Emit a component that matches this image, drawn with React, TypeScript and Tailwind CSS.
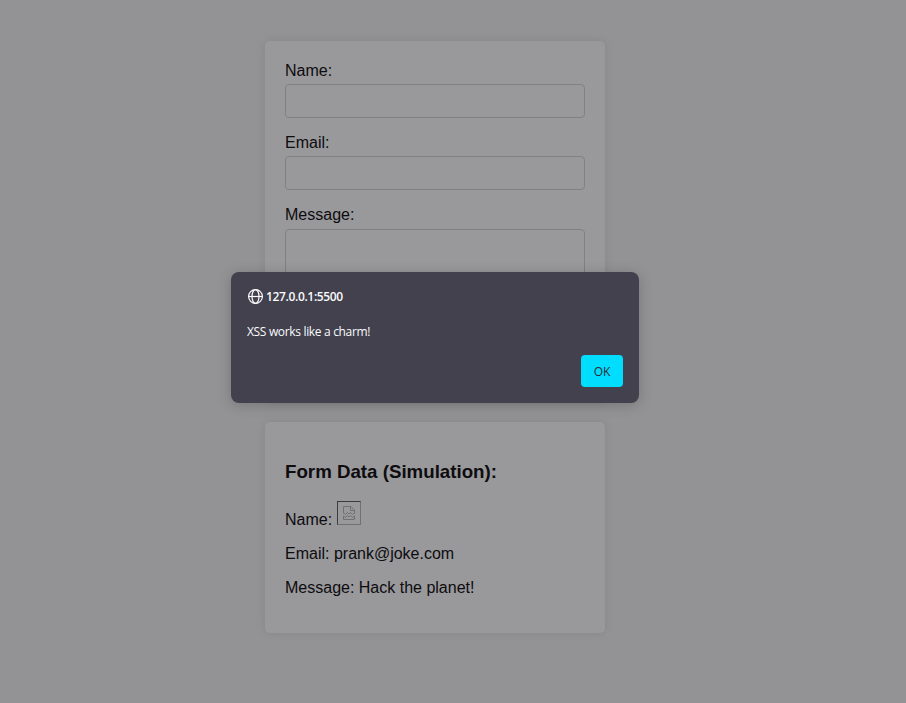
const fields = ['Name:', 'Email:'];

function BrokenImage() {
  return (
    <span className="ml-[5px] inline-block h-6 w-6 border border-t-[#555] border-l-[#555] border-r-[#b4b4b4] border-b-[#b4b4b4] align-baseline">
      <svg className="block h-[22px] w-[22px]" viewBox="0 0 22 22" fill="none" stroke="#b5b5b5">
        <path d="M5.5 11.5V4.5H13L16.5 8V11.5M12.5 4.5V8.5H16.5" />
        <path d="M5.5 10.5L7.5 12.5L9.5 10.5L11 12L12.5 10.5L14.5 12.5L16.5 10.5" />
        <path d="M5.5 14L7.5 15.5L9.5 13.5L11 15L12.5 13.5L14.5 15.5L16.5 14V17.5H5.5V14Z" />
      </svg>
    </span>
  );
}

export default function App() {
  return (
    <div className="relative h-[703px] w-[906px] overflow-hidden bg-[#f4f4f4] font-['Liberation_Sans',Arial,sans-serif] text-base leading-[18px] text-black">
      <main className="ml-[265px] flex w-[340px] flex-col gap-5 pt-[41px]">
        <form className="h-[361px] rounded-[5px] bg-white px-5 pt-5 shadow-[0_0_10px_rgba(0,0,0,0.1)]">
          {fields.map((label) => (
            <label key={label} className="mb-[15px] block">
              <span className="block h-[23px] pt-px">{label}</span>
              <input className="block h-[34px] w-full rounded-[4px] border border-[#d4d4d4] px-2" />
            </label>
          ))}
          <label className="block">
            <span className="block h-6 pt-px">Message:</span>
            <textarea className="block h-[70px] w-full resize-none rounded-[4px] border border-[#d4d4d4]" />
          </label>
        </form>
        <section className="h-[211px] rounded-[5px] bg-white px-5 pt-[39px] shadow-[0_0_10px_rgba(0,0,0,0.1)]">
          <h3 className="text-[18.72px] leading-[21px] font-bold">Form Data (Simulation):</h3>
          <p className="mt-[19px] flex h-[28px] items-start">
            <span className="pt-[10px]">Name:</span>
            <BrokenImage />
          </p>
          <p className="mt-4">Email: prank@joke.com</p>
          <p className="mt-4">Message: Hack the planet!</p>
        </section>
      </main>

      <div className="absolute inset-0 bg-[rgba(28,27,34,0.45)] pt-[272px] pl-[231px]">
        <div role="alertdialog" className="flex h-[131px] w-[408px] flex-col rounded-lg bg-[#42414d] p-4 font-['Open_Sans','Noto_Sans',sans-serif] text-[12px] leading-4 text-[#fbfbfe] shadow-[0_2px_14px_rgba(0,0,0,0.2)]">
          <div className="flex h-[17px] items-start gap-1">
            <svg className="h-4 w-4" viewBox="-0.5 -0.5 16 16" fill="none" stroke="#fbfbfe" strokeWidth="1.2">
              <circle cx="8" cy="8" r="6.9" />
              <ellipse cx="8" cy="8" rx="3.5" ry="6.9" />
              <path d="M1 8H15" />
            </svg>
            <span className="-ml-px pt-px font-semibold tracking-[-0.35px] whitespace-nowrap">127.0.0.1:5500</span>
          </div>
          <p className="mt-[19px] tracking-[-0.33px] whitespace-nowrap">XSS works like a charm!</p>
          <button className="mt-[15px] h-8 w-[42px] self-end rounded-[4px] bg-[#00ddff] pt-px text-[12px] text-[#2b2a33]">OK</button>
        </div>
      </div>
    </div>
  );
}
